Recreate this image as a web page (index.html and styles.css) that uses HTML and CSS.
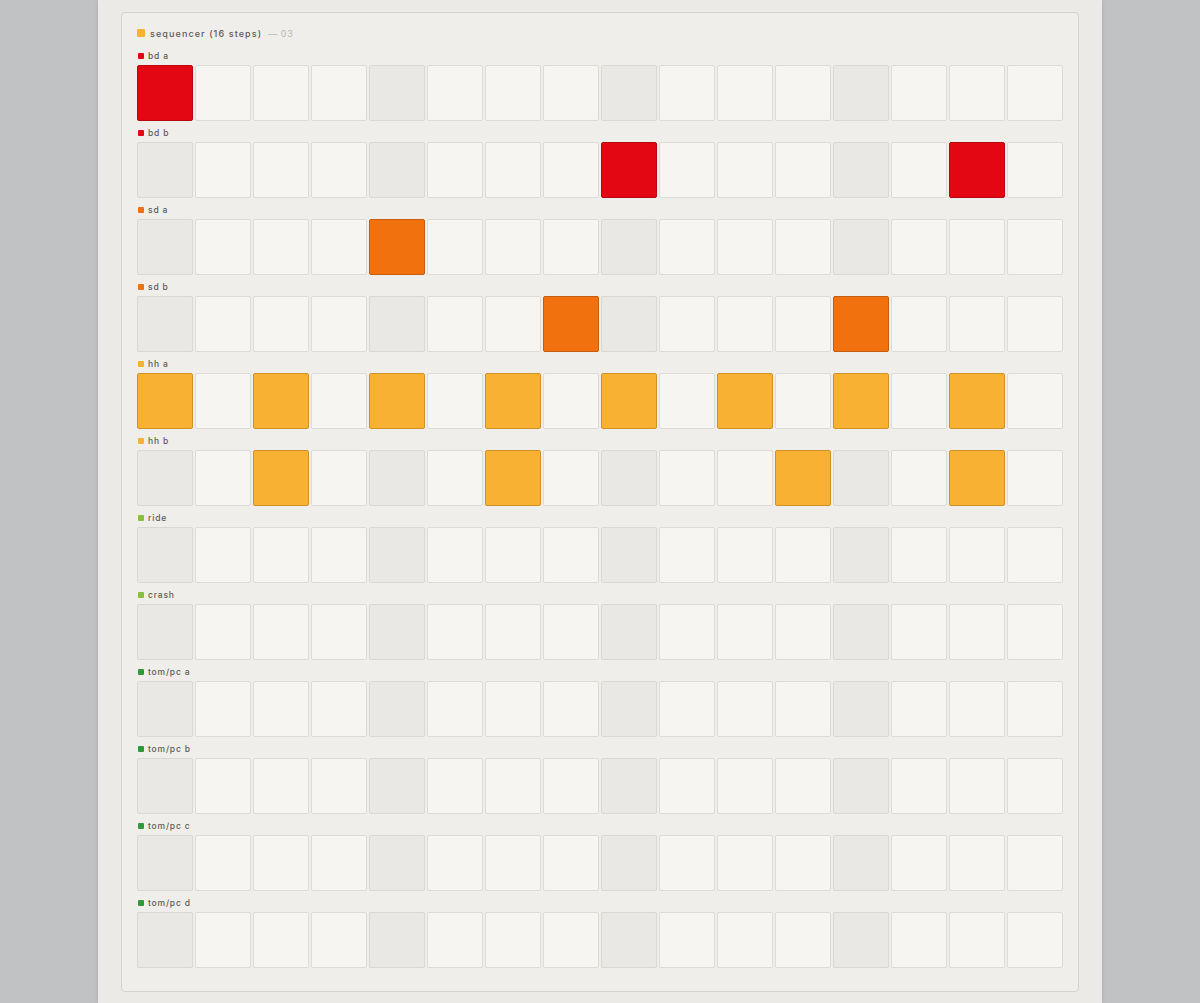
FILE: index.html
```html
<!DOCTYPE html>
<html lang="en">
<head>
    <meta charset="UTF-8">
    <meta name="viewport" content="width=device-width, initial-scale=1.0">
    <title>Sequencer</title>
    <link rel="stylesheet" href="styles.css">
</head>
<body>
    <div class="page">
        <div class="panel">
            <div class="panel-title">
                <span class="title-dot"></span>
                <span class="title-text">sequencer (16 steps)</span>
                <span class="title-num">— 03</span>
            </div>
            <div id="tracks"></div>
        </div>
    </div>

    <script>
        const tracks = [
            { name: "bd a", color: "red", steps: [1] },
            { name: "bd b", color: "red", steps: [9, 15] },
            { name: "sd a", color: "orange", steps: [5] },
            { name: "sd b", color: "orange", steps: [8, 13] },
            { name: "hh a", color: "yellow", steps: [1, 3, 5, 7, 9, 11, 13, 15] },
            { name: "hh b", color: "yellow", steps: [3, 7, 12, 15] },
            { name: "ride", color: "lime", steps: [] },
            { name: "crash", color: "lime", steps: [] },
            { name: "tom/pc a", color: "green", steps: [] },
            { name: "tom/pc b", color: "green", steps: [] },
            { name: "tom/pc c", color: "green", steps: [] },
            { name: "tom/pc d", color: "green", steps: [] }
        ];

        const box = document.getElementById("tracks");

        tracks.forEach(track => {
            const row = document.createElement("div");
            row.className = "track";

            const label = document.createElement("div");
            label.className = "track-label";
            const dot = document.createElement("span");
            dot.className = "dot " + track.color;
            const name = document.createElement("span");
            name.textContent = track.name;
            label.append(dot, name);

            const steps = document.createElement("div");
            steps.className = "steps";
            for (let i = 1; i <= 16; i++) {
                const cell = document.createElement("div");
                cell.className = "step";
                if (i % 4 == 1) cell.classList.add("beat");
                if (track.steps.includes(i)) cell.classList.add("on", track.color);
                steps.append(cell);
            }

            row.append(label, steps);
            box.append(row);
        });
    </script>
</body>
</html>
```

FILE: styles.css
```css
*{
    margin: 0;
    padding: 0;
    box-sizing: border-box;
}
body{
    background-color: #c1c2c4;
    font-family: Inter, "Liberation Sans", sans-serif;
    color: #55534f;
}
.page{
    width: 1004px;
    min-height: 1003px;
    margin: 0 auto;
    padding: 12px 23px;
    background-color: #ebeae6;
    box-shadow: 0 0 5px rgba(0, 0, 0, 0.12);
}
.panel{
    background-color: #efeeea;
    border: 1px solid #d4d3ce;
    border-radius: 4px;
    padding: 13px 15px 23px;
}
.panel-title{
    display: flex;
    align-items: center;
    height: 14px;
    margin-bottom: 10px;
    font-size: 9px;
    letter-spacing: 1.1px;
}
.title-dot{
    width: 8px;
    height: 8px;
    border-radius: 1px;
    background-color: #f8b133;
    margin-right: 5px;
}
.title-text{
    color: #5d5b57;
    font-weight: 500;
}
.title-num{
    margin-left: 6px;
    color: #b9b7b2;
    letter-spacing: 0.6px;
}
#tracks{
    display: flex;
    flex-direction: column;
    gap: 6px;
}
.track-label{
    display: flex;
    align-items: center;
    height: 12px;
    margin-bottom: 3px;
    font-size: 8.5px;
    font-weight: 500;
    letter-spacing: 0.8px;
    color: #5d5b57;
}
.dot{
    width: 6px;
    height: 6px;
    border-radius: 1px;
    margin: 0 4px 0 1px;
}
.dot.red{ background-color: #e30613; }
.dot.orange{ background-color: #f2710f; }
.dot.yellow{ background-color: #f8b133; }
.dot.lime{ background-color: #86c13a; }
.dot.green{ background-color: #2f9a3a; }
.steps{
    display: grid;
    grid-template-columns: repeat(16, 56px);
    gap: 2px;
}
.step{
    height: 56px;
    background-color: #f6f5f1;
    border: 1px solid #dcdbd6;
    border-radius: 2px;
}
.step.beat{
    background-color: #e9e8e4;
    border-color: #d9d8d3;
}
.step.on.red{
    background-color: #e30613;
    border-color: #b9070f;
}
.step.on.orange{
    background-color: #f2710f;
    border-color: #c75c0b;
}
.step.on.yellow{
    background-color: #f8b133;
    border-color: #cf9227;
}
```
